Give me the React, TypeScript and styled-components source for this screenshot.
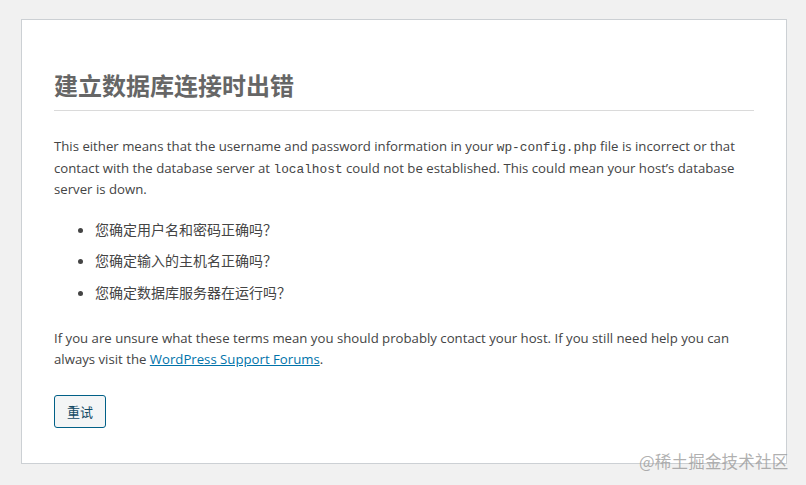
import styled, { createGlobalStyle } from "styled-components";

const GlobalStyle = createGlobalStyle`
  html, body {
    margin: 0;
    padding: 0;
    background: #f1f1f1;
  }
  body {
    font-family: "Open Sans", "Noto Sans CJK SC", sans-serif;
  }
`;

const questions = [
  "您确定用户名和密码正确吗？",
  "您确定输入的主机名正确吗？",
  "您确定数据库服务器在运行吗？",
];

export default function App() {
  return (
    <>
      <GlobalStyle />
      <Page>
        <Card>
          <Heading>建立数据库连接时出错</Heading>
          <Paragraph>
            This either means that the username and password information in
            your <Code>wp-config.php</Code> file is incorrect or that contact
            with the database server at <Code>localhost</Code> could not be
            established. This could mean your host’s database server is down.
          </Paragraph>
          <List>
            {questions.map((q) => (
              <Item key={q}>{q}</Item>
            ))}
          </List>
          <Paragraph>
            If you are unsure what these terms mean you should probably contact
            your host. If you still need help you can always visit the{" "}
            <Link href="#">WordPress Support Forums</Link>.
          </Paragraph>
          <Button>重试</Button>
        </Card>
        <Watermark>@稀土掘金技术社区</Watermark>
      </Page>
    </>
  );
}

const Page = styled.div`
  position: relative;
  width: 806px;
  height: 485px;
  padding: 19px 0 0 21px;
  box-sizing: border-box;
`;

const Card = styled.div`
  width: 766px;
  height: 445px;
  box-sizing: border-box;
  background: #fff;
  border: 1px solid #ccd0d4;
  padding: 53px 32px 0;
  color: #444;
  font-size: 13.2px;
  line-height: 21.5px;
`;

const Heading = styled.h1`
  margin: 0;
  padding: 0 0 13px;
  border-bottom: 1px solid #dadada;
  color: #666;
  font-family: "Noto Sans CJK SC", sans-serif;
  font-size: 24px;
  font-weight: 700;
  line-height: 24px;
`;

const Paragraph = styled.p`
  margin: 25px 0 0;
`;

const Code = styled.span`
  font-family: "Liberation Mono", "DejaVu Sans Mono", monospace;
  font-size: 12.8px;
  line-height: 1;
`;

const List = styled.ul`
  margin: 18px 0 0;
  padding-left: 41px;
`;

const Item = styled.li`
  font-family: "Noto Sans CJK SC", sans-serif;
  font-size: 14px;
  line-height: 21px;
  & + & {
    margin-top: 10.5px;
  }
`;

const Link = styled.a`
  color: #0073aa;
`;

const Button = styled.button`
  display: block;
  margin-top: 24px;
  width: 52px;
  height: 33px;
  padding: 0;
  background: #f3f5f6;
  border: 1px solid #016087;
  border-radius: 3px;
  color: #124964;
  font-family: "Noto Sans CJK SC", sans-serif;
  font-size: 13px;
`;

const Watermark = styled.div`
  position: absolute;
  left: 639px;
  top: 449px;
  color: rgba(150, 150, 150, 0.75);
  font-family: "Noto Sans CJK SC", sans-serif;
  font-size: 16.5px;
  line-height: 24px;
  letter-spacing: 0.2px;
`;
